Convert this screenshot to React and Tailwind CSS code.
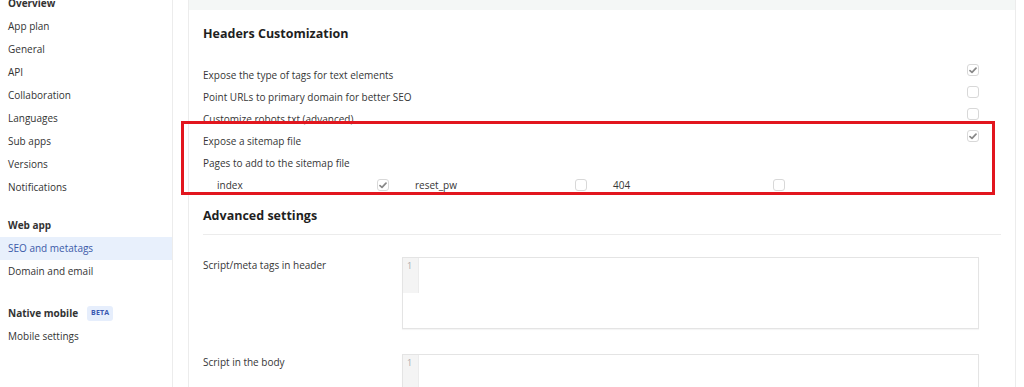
import React from 'react';

const font = { fontFamily: '"Open Sans", "Noto Sans", Arial, sans-serif' };

const NavItem = ({ label, active, bold, badge }) => (
  <div
    className={
      'h-[23px] flex items-center pl-2 ' +
      (active ? 'bg-[#e8f0fc] text-[#3c5aa8] ' : 'text-[#333] ') +
      (bold ? 'font-bold text-[#222]' : '')
    }
  >
    {label}
    {badge && (
      <span className="ml-[9px] px-[4px] h-[15px] flex items-center rounded-[3px] bg-[#e6eefc] text-[#3a57b0] text-[7px] font-bold tracking-wide">
        {badge}
      </span>
    )}
  </div>
);

const Check = ({ on }) => (
  <div className="w-[12px] h-[12px] rounded-[3px] border border-[#d8d8d8] bg-white flex items-center justify-center shrink-0">
    {on && (
      <svg width="8" height="7" viewBox="0 0 8 7">
        <path d="M1 3.6 L3 5.4 L7 1.2" fill="none" stroke="#888" strokeWidth="1.7" strokeLinecap="round" strokeLinejoin="round" />
      </svg>
    )}
  </div>
);

const OptionRow = ({ label, on }) => (
  <div className="h-[22px] flex items-start justify-between pr-[22px]">
    <span className="leading-[22px]">{label}</span>
    {on !== undefined && <Check on={on} />}
  </div>
);

const PageCol = ({ label, on }) => (
  <div className="w-[198px] flex items-center">
    <span className="w-[160px]">{label}</span>
    <Check on={on} />
  </div>
);

const Editor = () => (
  <div className="w-[577px] h-[72px] border border-[#e4e4e4] shadow-[0_1px_1px_rgba(0,0,0,0.04)] flex bg-white">
    <div className="w-[16px] h-[35px] bg-[#f4f4f4] border-r border-[#ececec] text-[#aaa] text-[9px] pl-[4px] pt-[1px] leading-[14px]">
      1
    </div>
  </div>
);

export default function App() {
  return (
    <div className="relative w-[1024px] h-[387px] overflow-hidden bg-white text-[10px] text-[#363636]" style={font}>
      <div className="flex h-full">
        <aside className="w-[173px] shrink-0 border-r border-[#ececec] -mt-[8px]">
          <NavItem label="Overview" bold />
          <NavItem label="App plan" />
          <NavItem label="General" />
          <NavItem label="API" />
          <NavItem label="Collaboration" />
          <NavItem label="Languages" />
          <NavItem label="Sub apps" />
          <NavItem label="Versions" />
          <NavItem label="Notifications" />
          <div className="h-[15px]" />
          <NavItem label="Web app" bold />
          <NavItem label="SEO and metatags" active />
          <NavItem label="Domain and email" />
          <div className="h-[19px]" />
          <NavItem label="Native mobile" bold badge="BETA" />
          <NavItem label="Mobile settings" />
        </aside>

        <main className="pl-[15px] flex-1">
          <div className="w-[828px] h-full border-x border-[#ececec]">
            <div className="h-[10px] bg-[#f4f7f6]" />
            <div className="px-[14px]">
              <h2 className="pt-[16px] h-[54px] text-[12.5px] font-bold text-[#1f1f1f] leading-[16px]">
                Headers Customization
              </h2>
              <OptionRow label="Expose the type of tags for text elements" on />
              <OptionRow label="Point URLs to primary domain for better SEO" on={false} />
              <OptionRow label="Customize robots txt (advanced)" on={false} />
              <OptionRow label="Expose a sitemap file" on />
              <OptionRow label="Pages to add to the sitemap file" />
              <div className="h-[22px] flex pl-[14px]">
                <PageCol label="index" on />
                <PageCol label="reset_pw" on={false} />
                <PageCol label="404" on={false} />
              </div>

              <h2 className="mt-[12px] h-[16px] text-[12.5px] font-bold text-[#1f1f1f] leading-[16px]">
                Advanced settings
              </h2>
              <div className="mt-[10px] border-t border-[#ececec]" />

              <div className="mt-[22px] flex">
                <span className="w-[199px] leading-[16px]">Script/meta tags in header</span>
                <Editor />
              </div>
              <div className="mt-[25px] flex">
                <span className="w-[199px] leading-[16px]">Script in the body</span>
                <Editor />
              </div>
            </div>
          </div>
        </main>
      </div>

      <div className="absolute left-[181px] top-[121px] w-[814px] h-[74px] border-[3px] border-[#e2161e] pointer-events-none" />
    </div>
  );
}
